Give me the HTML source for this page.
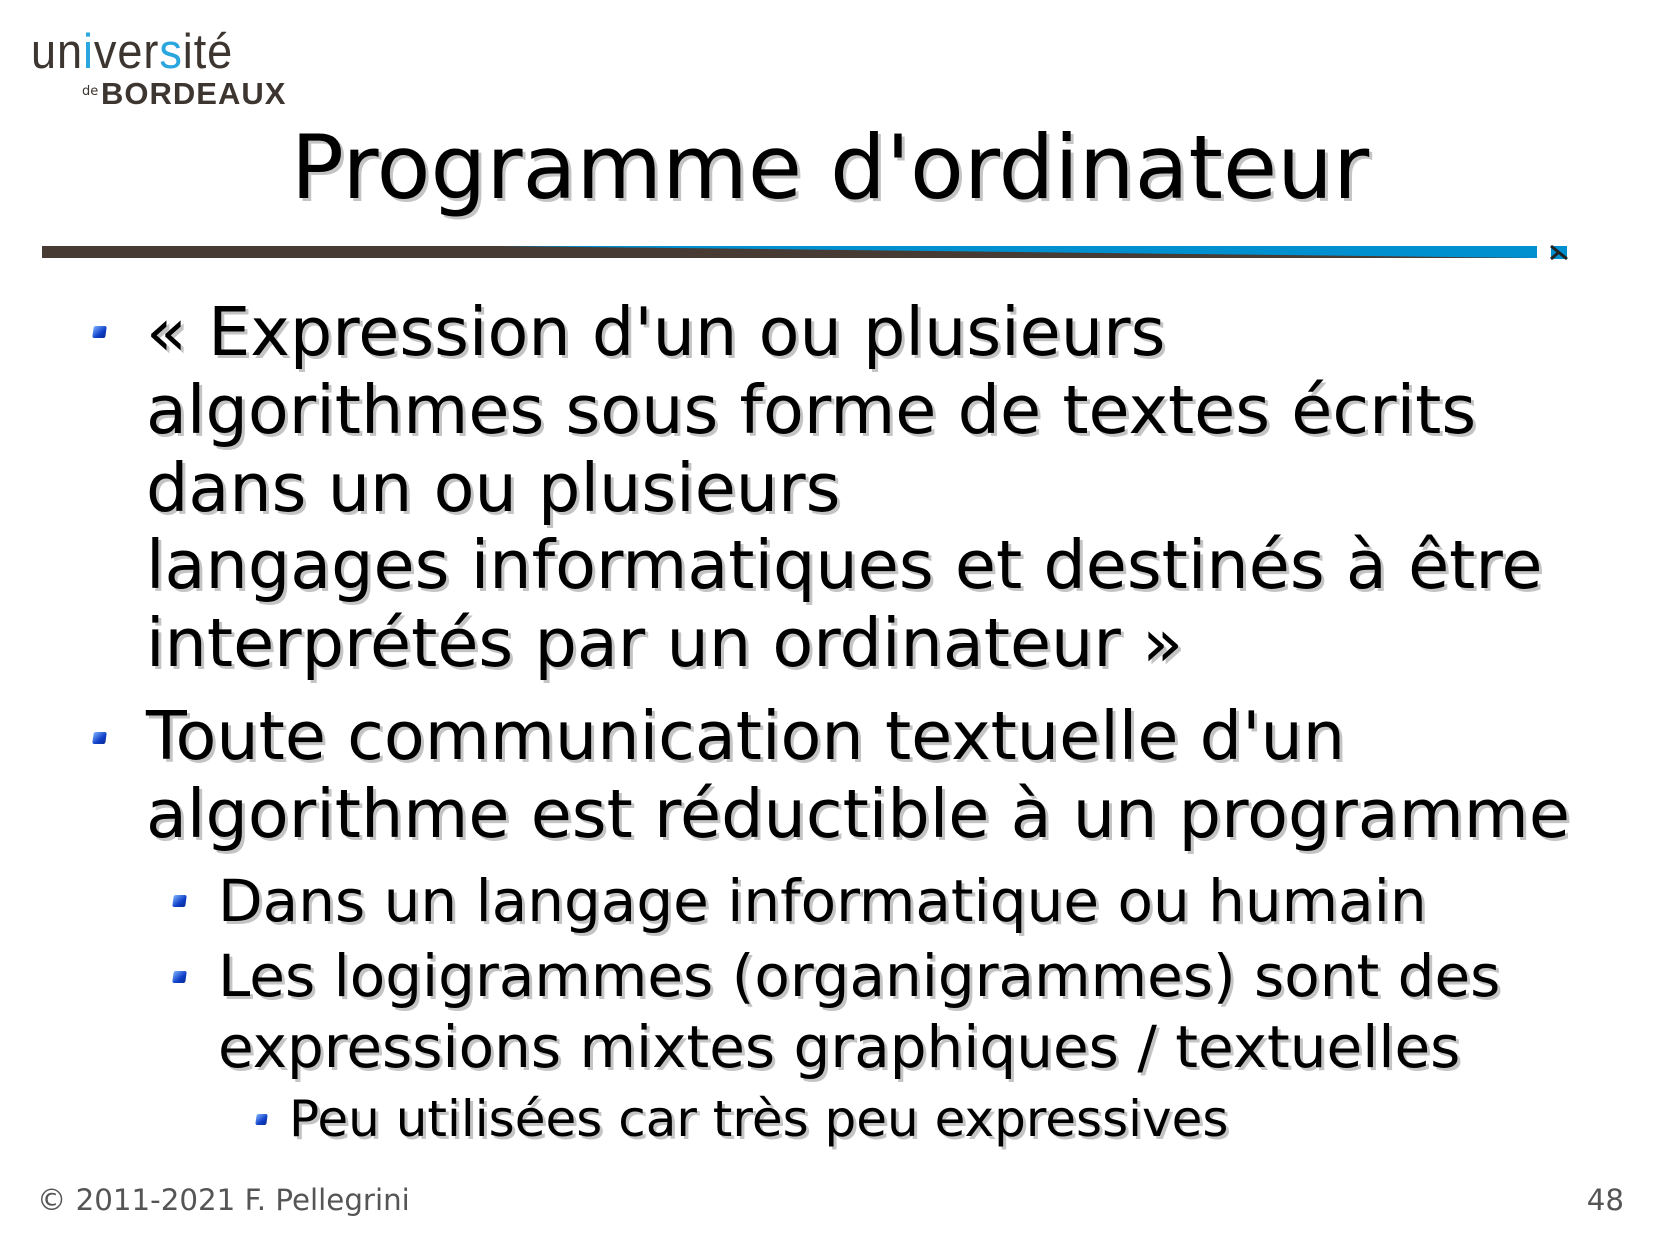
<!DOCTYPE html>
<html><head><meta charset="utf-8"><style>
body{margin:0;width:1654px;height:1241px;background:#fff;position:relative;overflow:hidden;font-family:"DejaVu Sans","Liberation Sans",sans-serif}
.t{position:absolute;white-space:nowrap;line-height:1;color:#000;text-shadow:3px 3px 0 #c4c4c4}
.l1{font-size:66.8px;left:146px}
.l2{font-size:58px;left:218px}
.l3{font-size:50px;left:289px}
.b{position:absolute;width:13px;height:12px;background:linear-gradient(135deg,#7fb2ff,#1040c8 60%,#0a2a90);border-radius:2px;transform:skewX(-8deg)}
</style></head><body>
<div style="position:absolute;left:31px;top:24px;font-family:'Liberation Sans',sans-serif;font-size:49px;color:#3d3530;transform:scaleX(0.92);transform-origin:left top;letter-spacing:1px">un<span style="color:#2aa6df">i</span>ver<span style="color:#2aa6df">s</span>ité</div>
<div style="position:absolute;left:82px;top:84px;font-size:13px;color:#3d3530">de</div>
<div style="position:absolute;left:101px;top:76px;font-family:'Liberation Sans',sans-serif;font-weight:bold;font-size:31px;color:#3d3530;letter-spacing:1px">BORDEAUX</div>
<div class="t" style="font-size:88px;left:0;width:1660px;text-align:center;top:124px">Programme d'ordinateur</div>
<svg style="position:absolute;left:0;top:240px" width="1654" height="24">
<polygon points="42,6 1537,6 1537,18 42,18" fill="#0090d0"/>
<polygon points="42,6 500,6 1537,18 42,18" fill="#473b33"/>
<rect x="1551" y="6" width="16" height="13" fill="#0090d0"/><path d="M1551 6 L1567 19 M1551 19 L1559 12" stroke="#222" stroke-width="3"/>
</svg>
<div class="b" style="left:93px;top:326px"></div>
<div class="t l1" style="top:299px">« Expression d'un ou plusieurs</div>
<div class="t l1" style="top:377px">algorithmes sous forme de textes écrits</div>
<div class="t l1" style="top:455px">dans un ou plusieurs</div>
<div class="t l1" style="top:532px">langages informatiques et destinés à être</div>
<div class="t l1" style="top:610px">interprétés par un ordinateur »</div>
<div class="b" style="left:93px;top:732px"></div>
<div class="t l1" style="top:703px">Toute communication textuelle d'un</div>
<div class="t l1" style="top:781px">algorithme est réductible à un programme</div>
<div class="b" style="left:173px;top:895px"></div>
<div class="t l2" style="top:872px">Dans un langage informatique ou humain</div>
<div class="b" style="left:173px;top:971px"></div>
<div class="t l2" style="top:947px">Les logigrammes (organigrammes) sont des</div>
<div class="t l2" style="top:1018px">expressions mixtes graphiques / textuelles</div>
<div class="b" style="left:256px;top:1114px;width:11px;height:11px"></div>
<div class="t l3" style="top:1094px">Peu utilisées car très peu expressives</div>
<div style="position:absolute;left:37px;top:1186px;font-size:29.3px;line-height:1;color:#555">© 2011-2021 F. Pellegrini</div>
<div style="position:absolute;right:30px;top:1186px;font-size:29.3px;line-height:1;color:#555">48</div>
</body></html>
